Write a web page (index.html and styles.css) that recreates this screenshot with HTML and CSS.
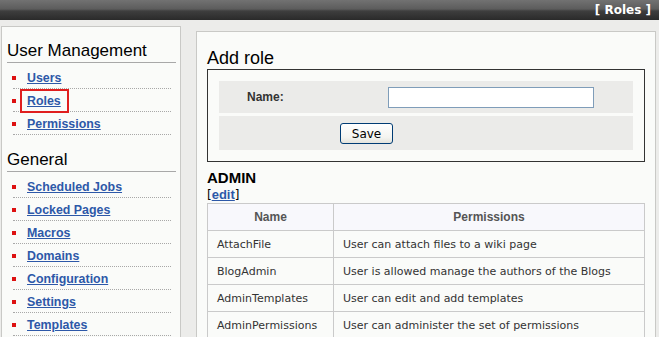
FILE: index.html
```html
<!DOCTYPE html>
<html lang="en">
<head>
<meta charset="utf-8">
<title>Roles</title>
<link rel="stylesheet" href="styles.css">
</head>
<body>
<div class="topbar"><span class="crumb">[ Roles ]</span></div>
<div class="layout">
  <aside class="sidebar">
    <h2 class="side-title">User Management</h2>
    <ul class="nav">
      <li><a href="#">Users</a></li>
      <li class="marked"><a href="#">Roles</a></li>
      <li><a href="#">Permissions</a></li>
    </ul>
    <h2 class="side-title">General</h2>
    <ul class="nav">
      <li><a href="#">Scheduled Jobs</a></li>
      <li><a href="#">Locked Pages</a></li>
      <li><a href="#">Macros</a></li>
      <li><a href="#">Domains</a></li>
      <li><a href="#">Configuration</a></li>
      <li><a href="#">Settings</a></li>
      <li><a href="#">Templates</a></li>
    </ul>
  </aside>
  <main class="content">
    <h1 class="page-title">Add role</h1>
    <form class="role-form">
      <div class="form-row">
        <label class="form-label" for="name">Name:</label>
        <input class="form-input" id="name" type="text">
      </div>
      <div class="form-row form-row-actions">
        <button class="btn" type="button">Save</button>
      </div>
    </form>
    <h3 class="role-title">ADMIN</h3>
    <div class="role-edit">[<a href="#">edit</a>]</div>
    <table class="perm-table">
      <thead>
        <tr><th class="col-name">Name</th><th>Permissions</th></tr>
      </thead>
      <tbody>
        <tr><td>AttachFile</td><td>User can attach files to a wiki page</td></tr>
        <tr><td>BlogAdmin</td><td>User is allowed manage the authors of the Blogs</td></tr>
        <tr><td>AdminTemplates</td><td>User can edit and add templates</td></tr>
        <tr><td>AdminPermissions</td><td>User can administer the set of permissions</td></tr>
      </tbody>
    </table>
  </main>
</div>
</body>
</html>
```

FILE: styles.css
```css
html, body {
  margin: 0;
  padding: 0;
  overflow: hidden;
}

body {
  background: #ececea;
  font-family: "DejaVu Sans", sans-serif;
  font-size: 11px;
  color: #333;
}

.topbar {
  height: 20px;
  background: linear-gradient(#727272 0%, #5c5c5c 45%, #3e3e3e 55%, #2a2a2a 100%);
  display: flex;
  justify-content: flex-end;
  align-items: center;
  padding-right: 8px;
}

.crumb {
  color: #fff;
  font-weight: bold;
  font-size: 12px;
  line-height: 14px;
}

.layout {
  display: flex;
  align-items: flex-start;
  padding: 6px 0 0 1px;
  gap: 15px;
}

.sidebar {
  width: 180px;
  height: 400px;
  box-sizing: border-box;
  background: #fafbf9;
  border: 1px solid #c9c9c6;
  padding: 14px 4px 0 5px;
}

.side-title {
  margin: 0;
  font-family: "Liberation Sans", sans-serif;
  font-weight: normal;
  font-size: 17px;
  line-height: 20px;
  color: #000;
  padding-bottom: 1px;
  border-bottom: 1px solid #a8a8a8;
}

.nav {
  list-style: none;
  margin: 3px 5px 15px 6px;
  padding: 0;
}

.nav li {
  position: relative;
  height: 22px;
  border-bottom: 1px dotted #a8a8a8;
  padding-left: 14px;
  display: flex;
  align-items: center;
}

.nav li::before {
  content: "";
  position: absolute;
  left: -1px;
  top: 10px;
  width: 4px;
  height: 4px;
  background: #dd1111;
}

.nav a {
  font-family: "Liberation Sans", sans-serif;
  font-weight: bold;
  font-size: 12.4px;
  color: #2d58a8;
  text-decoration: underline;
  padding-top: 1px;
}

.nav li.marked::after {
  content: "";
  position: absolute;
  left: 7px;
  top: 0;
  width: 49px;
  height: 24px;
  box-sizing: border-box;
  border: 2px solid #e01e1e;
}

.content {
  width: 460px;
  height: 400px;
  box-sizing: border-box;
  margin-top: 5px;
  background: #fafbf9;
  border: 1px solid #c9c9c6;
  padding: 16px 10px 0 10px;
}

.page-title {
  margin: 0;
  font-family: "Liberation Sans", sans-serif;
  font-weight: normal;
  font-size: 18px;
  line-height: 21px;
  color: #000;
}

.role-form {
  margin: 0;
  border: 1px solid #333;
  padding: 11px;
  display: flex;
  flex-direction: column;
  gap: 3px;
}

.form-row {
  background: #ebebe9;
  height: 32px;
  display: flex;
  align-items: center;
}

.form-row-actions {
  height: 34px;
  padding-left: 121px;
}

.form-label {
  width: 141px;
  padding-left: 28px;
  font-family: "Liberation Sans", sans-serif;
  font-weight: bold;
  font-size: 12px;
  color: #333;
}

.form-input {
  width: 206px;
  height: 21px;
  box-sizing: border-box;
  border: 1px solid #7f9db9;
  background: #fff;
  margin: 0;
  padding: 0 3px;
}

.btn {
  width: 53px;
  height: 21px;
  box-sizing: border-box;
  border: 1px solid #003c74;
  border-radius: 3px;
  background: linear-gradient(#ffffff, #f4f4f0 70%, #e3e3dc);
  font-family: "DejaVu Sans", sans-serif;
  font-size: 12px;
  color: #000;
  padding: 0;
  margin-top: 1px;
}

.role-title {
  margin: 7px 0 0 0;
  font-family: "Liberation Sans", sans-serif;
  font-weight: bold;
  font-size: 15px;
  line-height: 18px;
  color: #000;
}

.role-edit {
  font-family: "DejaVu Sans", sans-serif;
  font-size: 12px;
  line-height: 15px;
  color: #000;
}

.role-edit a {
  font-family: "Liberation Sans", sans-serif;
  font-weight: bold;
  font-size: 13px;
  color: #2d58a8;
}

.perm-table {
  width: 438px;
  border-collapse: collapse;
  border: 1px solid #cacaca;
}

.perm-table th,
.perm-table td {
  border: 1px solid #cacaca;
  height: 27px;
  padding: 0 9px;
  box-sizing: border-box;
}

.perm-table th {
  background: #f8f8fc;
  font-family: "Liberation Sans", sans-serif;
  font-weight: bold;
  font-size: 12px;
  color: #555;
  text-align: center;
}

.perm-table .col-name {
  width: 126px;
}

.perm-table td {
  font-size: 11px;
  color: #333;
  text-align: left;
}
```
